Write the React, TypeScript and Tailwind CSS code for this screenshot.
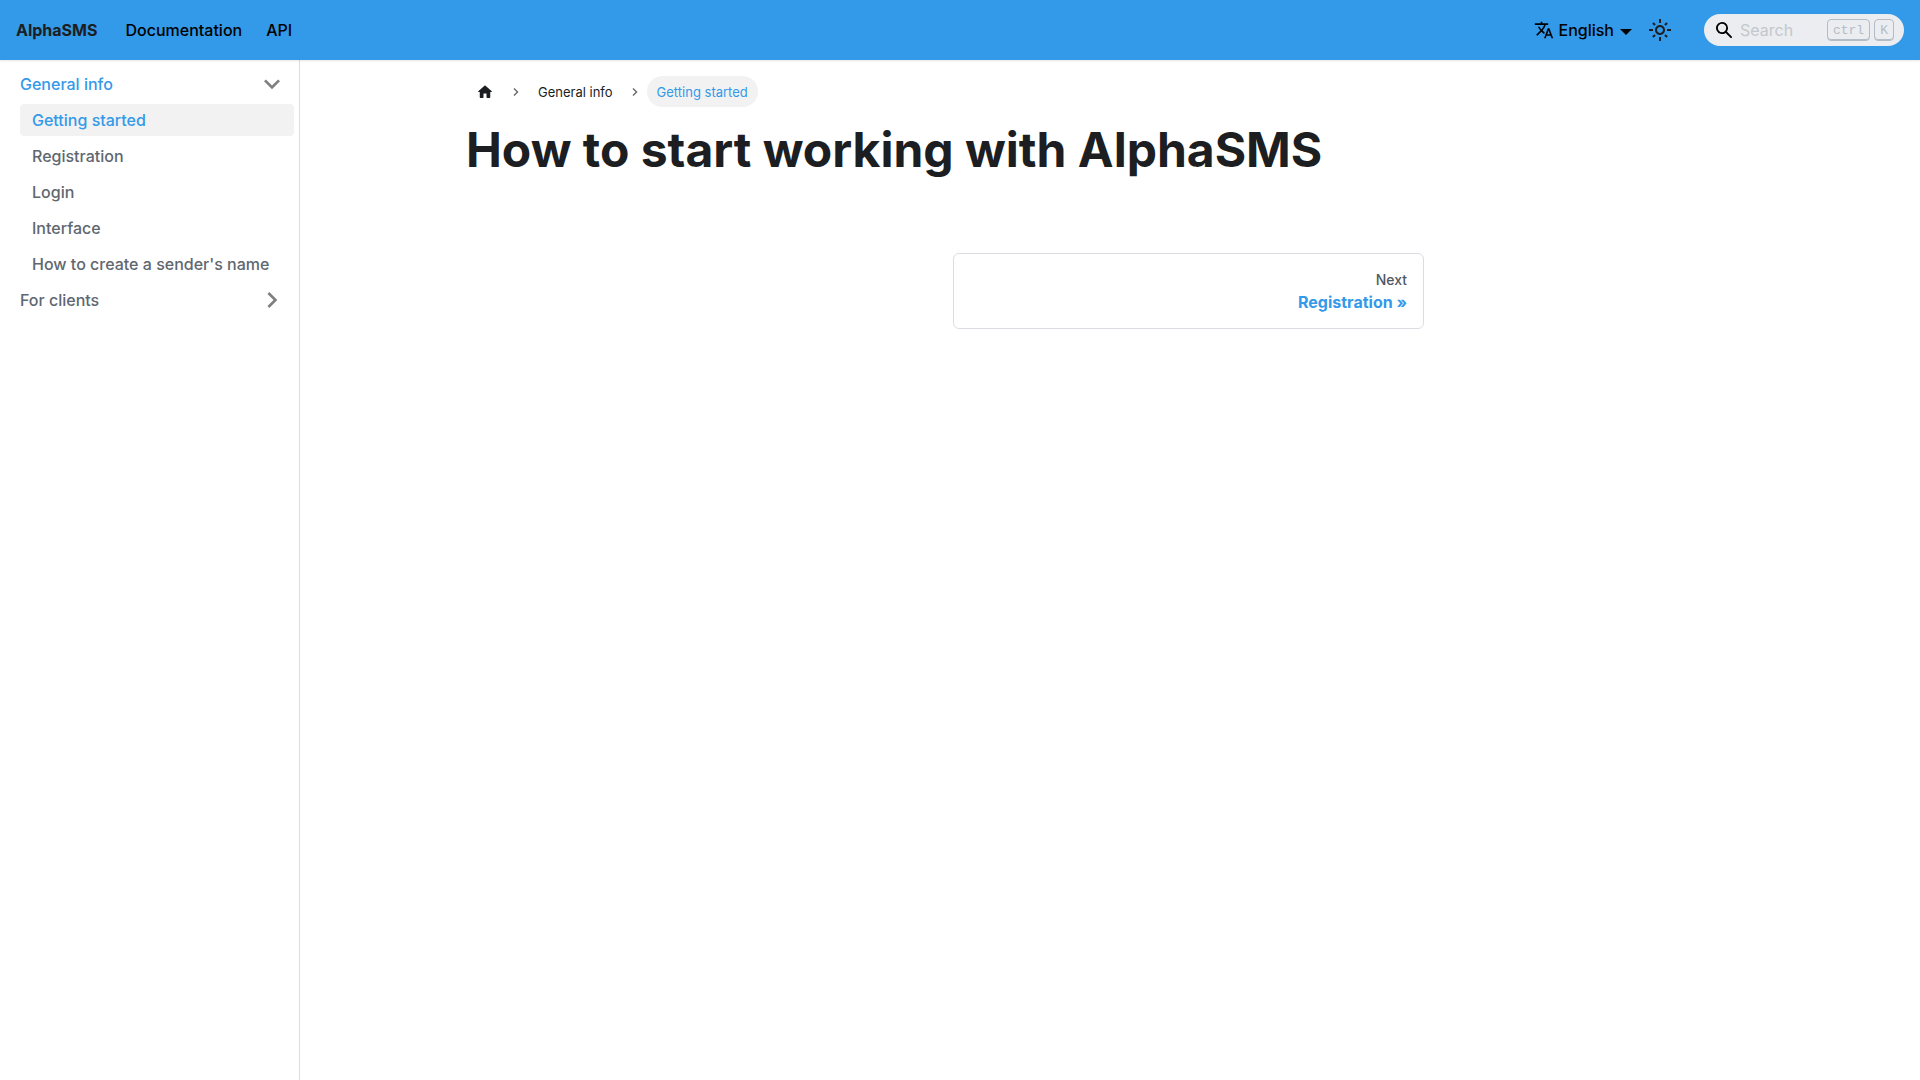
import { useState } from "react";
import { MdTranslate } from "react-icons/md";

const docs = [
  { label: "Getting started", href: "#getting-started" },
  { label: "Registration", href: "#registration" },
  { label: "Login", href: "#login" },
  { label: "Interface", href: "#interface" },
  { label: "How to create a sender's name", href: "#sender-name" },
];

function Caret({ open }: { open: boolean }) {
  return (
    <svg viewBox="0 0 24 24" className={open ? "-mr-1.5 h-8 w-8 rotate-180" : "-mr-1.5 h-8 w-8 rotate-90"}>
      <path fill="rgba(0,0,0,0.5)" d="M7.41 15.41L12 10.83l4.59 4.58L18 14l-6-6-6 6z" />
    </svg>
  );
}

function SunIcon() {
  return (
    <svg viewBox="0 0 24 24" className="h-6 w-6" fill="currentColor">
      <path d="M12,9c1.65,0,3,1.35,3,3s-1.35,3-3,3s-3-1.35-3-3S10.35,9,12,9 M12,7c-2.76,0-5,2.24-5,5s2.24,5,5,5s5-2.24,5-5S14.76,7,12,7L12,7z" />
      <path d="M1 11h4v2H1zM19 11h4v2h-4zM11 1h2v4h-2zM11 19h2v4h-2zM5.63 4.21l2.13 2.13-1.42 1.42-2.13-2.13zM17.66 16.24l2.13 2.13-1.42 1.42-2.13-2.13zM18.37 4.21l1.42 1.42-2.13 2.13-1.42-1.42zM6.34 16.24l1.42 1.42-2.13 2.13-1.42-1.42z" />
    </svg>
  );
}

function Separator() {
  return (
    <svg viewBox="0 0 24 24" className="mx-2 h-2 w-2 opacity-60">
      <path d="M7.33 24l-2.83-2.829 9.339-9.175-9.339-9.167 2.83-2.829 12.17 11.996z" />
    </svg>
  );
}

const kbdCls =
  "flex h-[22px] items-center justify-center rounded border border-[#b4bdc6] px-[5px] pt-0.5 font-['Liberation_Mono',monospace] text-[13px] text-[#b4bdc6] shadow-[inset_0_-1px_0_#b4bdc6]";

function Navbar() {
  return (
    <nav className="relative z-10 flex h-[60px] items-center justify-between bg-[#3399e9] px-4 shadow-[0_1px_2px_rgba(0,0,0,0.1)]">
      <div className="flex items-center">
        <a href="#home" className="mr-4 font-bold text-[#1c1e21]">AlphaSMS</a>
        <a href="#docs" className="px-3 font-medium text-black">Documentation</a>
        <a href="#api" className="px-3 font-medium text-black">API</a>
      </div>
      <div className="flex items-center">
        <button type="button" className="flex items-center px-3 font-medium text-black">
          <MdTranslate className="mr-[5px] h-5 w-5" />
          English
          <span className="mt-1 ml-1.5 border-x-6 border-t-6 border-x-transparent border-t-black" />
        </button>
        <button type="button" aria-label="Switch theme" className="flex h-8 w-8 items-center justify-center rounded-full text-[#1c1e21]">
          <SunIcon />
        </button>
        <div className="ml-7 flex h-8 w-[200px] items-center rounded-full bg-[#ebedf0] pr-2.5 pl-3">
          <svg viewBox="0 0 16 16" className="h-4 w-4 shrink-0">
            <path d="M6.02945,10.20327a4.17382,4.17382,0,1,1,4.17382-4.17382A4.15609,4.15609,0,0,1,6.02945,10.20327Zm9.69195,4.2199L10.8989,9.59979A5.88021,5.88021,0,0,0,12.058,6.02856,6.00467,6.00467,0,1,0,9.59979,10.8989l4.82338,4.82338a.89729.89729,0,0,0,1.29912,0,.89749.89749,0,0,0-.00087-1.29909Z" />
          </svg>
          <input aria-label="Search" placeholder="Search" className="ml-2 w-0 flex-1 bg-transparent outline-none placeholder:text-[#c4c7cc]" />
          <kbd className={kbdCls}>ctrl</kbd>
          <kbd className={`${kbdCls} ml-1`}>K</kbd>
        </div>
      </div>
    </nav>
  );
}

function Sidebar() {
  const [infoOpen, setInfoOpen] = useState(true);
  const [clientsOpen, setClientsOpen] = useState(false);
  const rowCls = "flex h-8 w-full items-center justify-between px-3 text-left";

  return (
    <aside className="w-[300px] shrink-0 border-r border-[#dadde1] py-2 pr-[5px] pl-2 font-medium text-[#606770]">
      <ul className="space-y-1">
        <li>
          <button type="button" aria-expanded={infoOpen} onClick={() => setInfoOpen(!infoOpen)} className={`${rowCls} text-[#3399e9]`}>
            General info
            <Caret open={infoOpen} />
          </button>
          {infoOpen && (
            <ul className="mt-1 space-y-1 pl-3">
              {docs.map((d, i) => (
                <li key={d.href}>
                  <a
                    href={d.href}
                    className={i === 0 ? "flex h-8 items-center rounded bg-[#f2f2f2] px-3 text-[#3399e9]" : "flex h-8 items-center rounded px-3"}
                  >
                    {d.label}
                  </a>
                </li>
              ))}
            </ul>
          )}
        </li>
        <li>
          <button type="button" aria-expanded={clientsOpen} onClick={() => setClientsOpen(!clientsOpen)} className={rowCls}>
            For clients
            <Caret open={clientsOpen} />
          </button>
        </li>
      </ul>
    </aside>
  );
}

export default function App() {
  return (
    <div className="flex min-h-screen flex-col bg-white font-['Inter',sans-serif] text-base text-[#1c1e21]">
      <Navbar />
      <div className="flex flex-1">
        <Sidebar />
        <main className="flex-1">
          <div className="mx-auto max-w-[1320px] pt-4">
            <div className="w-3/4 px-4">
              <nav aria-label="Breadcrumbs" className="mb-[13px] flex h-[31px] items-center text-[13px] leading-5">
                <a href="#home" aria-label="Home page" className="px-2.5">
                  <svg viewBox="0 0 24 24" className="h-[18px] w-[18px]" fill="currentColor">
                    <path d="M10 19v-5h4v5c0 .55.45 1 1 1h3c.55 0 1-.45 1-1v-7h1.7c.46 0 .68-.57.33-.87L12.67 3.6c-.38-.34-.96-.34-1.34 0l-8.36 7.53c-.34.3-.13.87.33.87H5v7c0 .55.45 1 1 1h3c.55 0 1-.45 1-1z" />
                  </svg>
                </a>
                <Separator />
                <a href="#general-info" className="px-2.5">General info</a>
                <Separator />
                <span className="flex h-full items-center rounded-full bg-[#f2f2f2] px-2.5 text-[#3399e9]">Getting started</span>
              </nav>
              <h1 className="text-5xl leading-[60px] font-bold">How to start working with AlphaSMS</h1>
              <nav aria-label="Docs pages" className="mt-[73px] grid grid-cols-2 gap-4">
                <a href="#registration" className="col-start-2 rounded-md border border-[#dadde1] px-4 py-[15px] text-right">
                  <div className="text-sm leading-[22px] font-medium text-[#525860]">Next</div>
                  <div className="leading-[22px] font-bold text-[#3399e9]">Registration »</div>
                </a>
              </nav>
            </div>
          </div>
        </main>
      </div>
    </div>
  );
}
